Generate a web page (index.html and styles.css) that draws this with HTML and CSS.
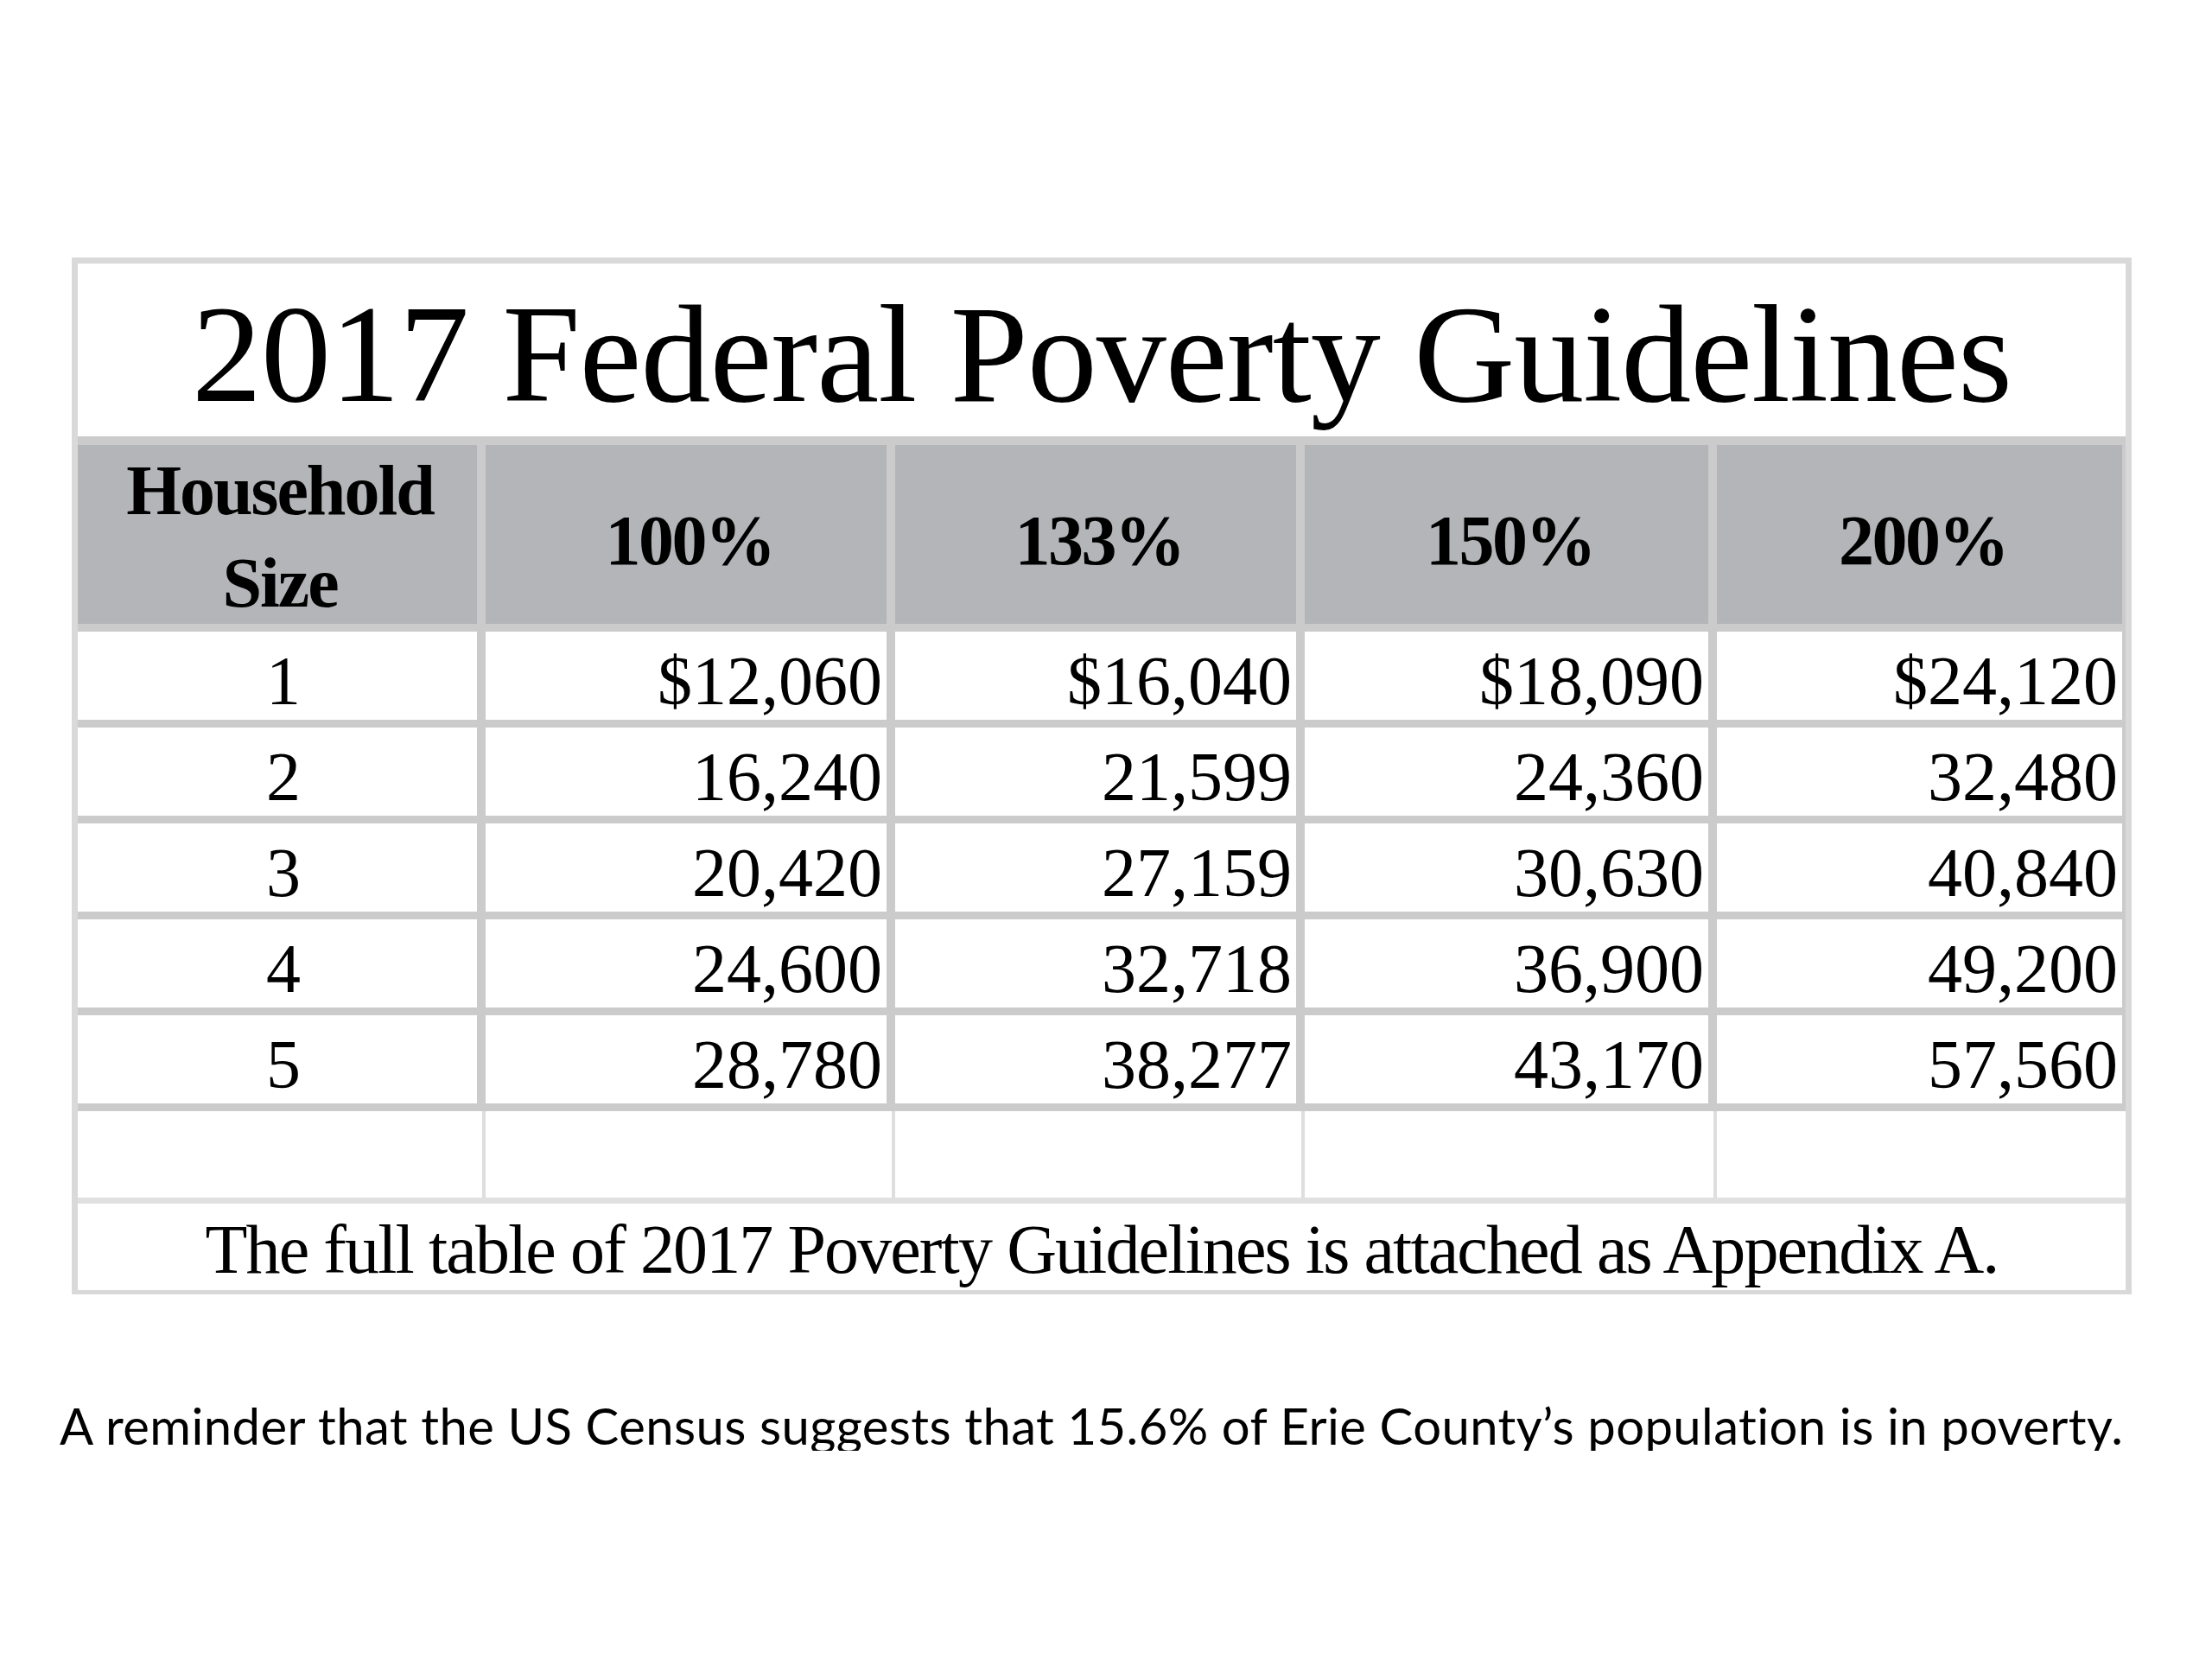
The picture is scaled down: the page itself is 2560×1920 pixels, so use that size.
FILE: index.html
```html
<!DOCTYPE html>
<html lang="en">
<head>
<meta charset="utf-8">
<title>2017 Federal Poverty Guidelines</title>
<link rel="stylesheet" href="styles.css">
</head>
<body>
<div class="page">
  <div class="sheet">
    <div class="title">2017 Federal Poverty Guidelines</div>
    <div class="grid">
      <div class="hcell hh">Household<br>Size</div>
      <div class="hcell pct">100%</div>
      <div class="hcell pct">133%</div>
      <div class="hcell pct">150%</div>
      <div class="hcell pct">200%</div>

      <div class="cell size">1</div>
      <div class="cell num">$12,060</div>
      <div class="cell num">$16,040</div>
      <div class="cell num">$18,090</div>
      <div class="cell num">$24,120</div>

      <div class="cell size">2</div>
      <div class="cell num">16,240</div>
      <div class="cell num">21,599</div>
      <div class="cell num">24,360</div>
      <div class="cell num">32,480</div>

      <div class="cell size">3</div>
      <div class="cell num">20,420</div>
      <div class="cell num">27,159</div>
      <div class="cell num">30,630</div>
      <div class="cell num">40,840</div>

      <div class="cell size">4</div>
      <div class="cell num">24,600</div>
      <div class="cell num">32,718</div>
      <div class="cell num">36,900</div>
      <div class="cell num">49,200</div>

      <div class="cell size">5</div>
      <div class="cell num">28,780</div>
      <div class="cell num">38,277</div>
      <div class="cell num">43,170</div>
      <div class="cell num">57,560</div>
    </div>
    <div class="empty">
      <div class="ecell"></div>
      <div class="ecell"></div>
      <div class="ecell"></div>
      <div class="ecell"></div>
      <div class="ecell"></div>
    </div>
    <div class="footer">The full table of 2017 Poverty Guidelines is attached as Appendix A.</div>
  </div>
  <p class="note">A reminder that the US Census suggests that 15.6% of Erie County’s population is in poverty.</p>
</div>
</body>
</html>
```

FILE: styles.css
```css
html, body {
  margin: 0;
  padding: 0;
  background: #ffffff;
}

.page {
  padding: 298px 0 0 83px;
}

.sheet {
  width: 2370px;
  border-style: solid;
  border-color: #d9d9d9;
  border-width: 7px 7px 5px 7px;
  font-family: "Liberation Serif", "Times New Roman", serif;
  color: #000;
}

.title {
  height: 200px;
  box-sizing: border-box;
  padding-top: 10px;
  display: flex;
  align-items: center;
  justify-content: center;
  font-size: 162px;
  line-height: 1;
  letter-spacing: -1px;
  white-space: nowrap;
}

.grid {
  display: grid;
  grid-template-columns: 462px 464px 464px 467px 1fr;
  grid-template-rows: 207px repeat(5, 102px);
  column-gap: 10px;
  row-gap: 9px;
  padding: 10px 4px 9px 0;
  background: #cbcbcb;
}

.hcell {
  background: #b4b5b9;
  font-weight: bold;
  font-size: 82px;
  line-height: 107px;
  text-align: center;
  box-sizing: border-box;
  display: flex;
  align-items: center;
  justify-content: center;
}

.hh {
  padding: 4px 0 0 6px;
  letter-spacing: -2px;
}

.pct {
  padding: 14px 0 0 8px;
  letter-spacing: -2.5px;
}

.cell {
  background: #ffffff;
  font-size: 80px;
  line-height: 1;
  box-sizing: border-box;
  padding-top: 12px;
  display: flex;
  align-items: center;
}

.size {
  justify-content: center;
  padding-left: 14px;
}

.num {
  justify-content: flex-end;
  padding-right: 5px;
}

.empty {
  display: grid;
  grid-template-columns: 462px 464px 464px 467px 1fr;
  column-gap: 10px;
  height: 100px;
  padding-right: 4px;
  border-bottom: 7px solid #e0e0e0;
  background: #ffffff;
}

.ecell + .ecell {
  box-shadow: -4px 0 0 #dedede;
}

.footer {
  height: 100px;
  box-sizing: border-box;
  padding-top: 6px;
  display: flex;
  align-items: center;
  justify-content: center;
  font-size: 80px;
  line-height: 1;
  letter-spacing: -1.9px;
  white-space: nowrap;
}

.note {
  margin: 123px 0 0 -14px;
  font-family: Lato, "Open Sans", sans-serif;
  font-size: 58px;
  letter-spacing: 0.4px;
  line-height: 1;
  white-space: nowrap;
  color: #000;
}
```
